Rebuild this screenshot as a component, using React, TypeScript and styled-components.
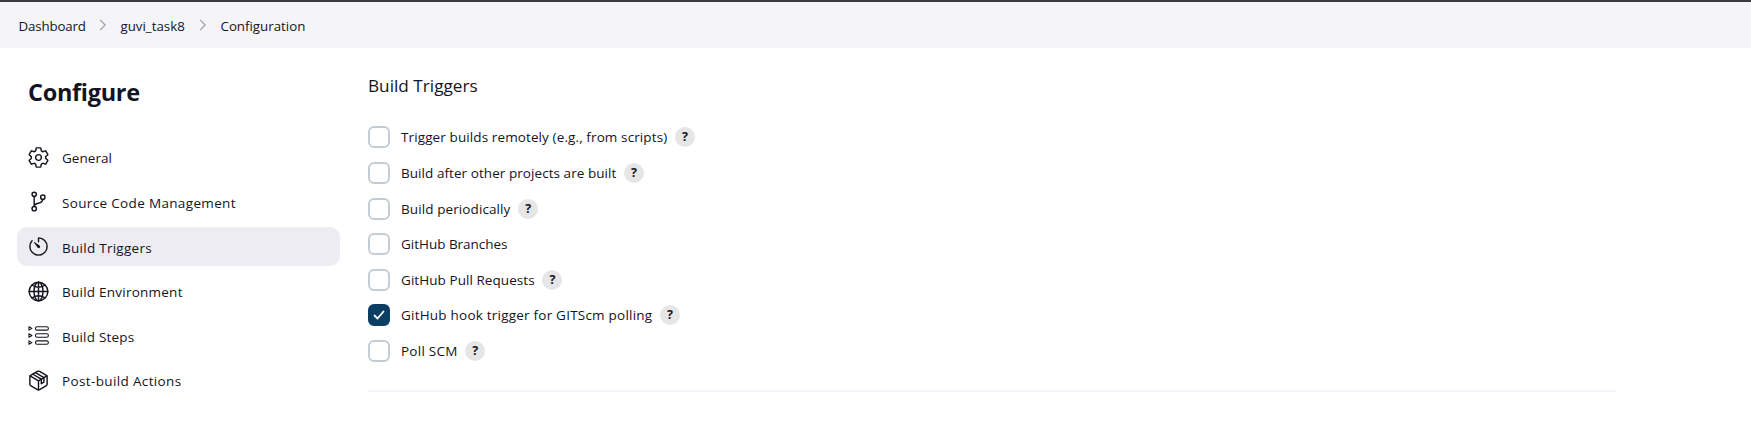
import React from 'react';
import styled, { createGlobalStyle } from 'styled-components';

const GlobalStyle = createGlobalStyle`
  *, *::before, *::after { box-sizing: border-box; }
  body {
    margin: 0;
    background: #fff;
    color: #14141f;
    font-family: 'Open Sans', 'Noto Sans', sans-serif;
    overflow: hidden;
  }
`;

const Page = styled.div`
  height: 422px;
  border-top: 2px solid #3b3a3d;
`;

const Breadcrumbs = styled.nav`
  display: flex;
  align-items: center;
  height: 46px;
  padding: 1px 18.5px 0;
  background: #f5f5f8;
`;

const Crumb = styled.span<{ $width: number; $tracking?: number }>`
  width: ${(p) => p.$width}px;
  white-space: nowrap;
  font-size: 13.3px;
  line-height: 20px;
  letter-spacing: ${(p) => p.$tracking ?? 0}px;
`;

const Chevron = styled.svg`
  width: 8px;
  height: 12px;
  margin: -2px 14px 0 13px;
  fill: none;
  stroke: #a5a5b5;
  stroke-width: 1.3;
`;

const Body = styled.div`
  display: flex;
  align-items: flex-start;
`;

const Sidebar = styled.aside`
  width: 368px;
  padding: 28px 28px 0 17px;
`;

const PageTitle = styled.h1`
  margin: 0 0 29.75px;
  padding-left: 11px;
  font-size: 23.5px;
  font-weight: 700;
  line-height: 32px;
  letter-spacing: -0.3px;
`;

const Menu = styled.ul`
  display: flex;
  flex-direction: column;
  gap: 5.64px;
  margin: 0;
  padding: 0;
  list-style: none;
`;

const MenuItem = styled.li<{ $active?: boolean }>`
  display: flex;
  align-items: center;
  gap: 12px;
  height: 39px;
  padding-left: 10px;
  border-radius: 10px;
  background: ${(p) => (p.$active ? '#ececf2' : 'transparent')};
`;

const MenuIcon = styled.svg`
  width: 23px;
  height: 23px;
  flex: none;
  fill: none;
  stroke: #14141f;
  stroke-width: 32;
  stroke-linecap: round;
  stroke-linejoin: round;
`;

const MenuLabel = styled.span<{ $tracking: number }>`
  padding-top: 2px;
  font-size: 13.5px;
  line-height: 20px;
  letter-spacing: ${(p) => p.$tracking}px;
  white-space: nowrap;
`;

const Main = styled.main`
  width: 1248px;
  padding-top: 24px;
`;

const SectionTitle = styled.h2`
  margin: 0 0 26.4px;
  font-size: 17.2px;
  font-weight: 400;
  line-height: 28px;
`;

const Options = styled.div`
  display: flex;
  flex-direction: column;
  gap: 13.6px;
  padding-bottom: 28px;
  border-bottom: 2px solid #f2f2f8;
`;

const Option = styled.label`
  display: flex;
  align-items: center;
  height: 22px;
`;

const Checkbox = styled.span<{ $checked?: boolean }>`
  display: grid;
  place-items: center;
  width: 22px;
  height: 22px;
  margin-right: 11px;
  border: 2px solid ${(p) => (p.$checked ? '#0b3e62' : '#c3cdd3')};
  border-radius: 6px;
  background: ${(p) => (p.$checked ? '#0b3e62' : '#fff')};
`;

const Check = styled.svg`
  width: 12px;
  height: 10px;
  fill: none;
  stroke: #fff;
  stroke-width: 1.8;
  stroke-linecap: round;
  stroke-linejoin: round;
`;

const OptionText = styled.span<{ $tracking: number }>`
  font-size: 13.5px;
  line-height: 20px;
  letter-spacing: ${(p) => p.$tracking}px;
  white-space: nowrap;
`;

const Help = styled.span`
  width: 20px;
  height: 20px;
  margin-left: 7.7px;
  border-radius: 50%;
  background: #e6e6e6;
  font-size: 12.5px;
  font-weight: 700;
  line-height: 20px;
  text-align: center;
`;

const icons = {
  gear: (
    <path d="M262.29 192.31a64 64 0 1057.4 57.4 64.13 64.13 0 00-57.4-57.4zM416.39 256a154.34 154.34 0 01-1.53 20.79l45.21 35.46a10.81 10.81 0 012.45 13.75l-42.77 74a10.81 10.81 0 01-13.14 4.59l-44.9-18.08a16.11 16.11 0 00-15.17 1.75A164.48 164.48 0 01325 400.8a15.94 15.94 0 00-8.82 12.14l-6.73 47.89a11.08 11.08 0 01-10.68 9.17h-85.54a11.11 11.11 0 01-10.69-8.87l-6.72-47.82a16.07 16.07 0 00-9-12.22 155.3 155.3 0 01-21.46-12.57 16 16 0 00-15.11-1.71l-44.89 18.07a10.81 10.81 0 01-13.14-4.58l-42.77-74a10.8 10.8 0 012.45-13.75l38.21-30a16.05 16.05 0 006-14.08c-.36-4.17-.58-8.33-.58-12.5s.21-8.27.58-12.35a16 16 0 00-6.07-13.94l-38.19-30A10.81 10.81 0 0149.48 186l42.77-74a10.81 10.81 0 0113.14-4.59l44.9 18.08a16.11 16.11 0 0015.17-1.75A164.48 164.48 0 01187 111.2a15.94 15.94 0 008.82-12.14l6.73-47.89A11.08 11.08 0 01213.23 42h85.54a11.11 11.11 0 0110.69 8.87l6.72 47.82a16.07 16.07 0 009 12.22 155.3 155.3 0 0121.46 12.57 16 16 0 0015.11 1.71l44.89-18.07a10.81 10.81 0 0113.14 4.58l42.77 74a10.8 10.8 0 01-2.45 13.75l-38.21 30a16.05 16.05 0 00-6.05 14.08c.33 4.14.55 8.3.55 12.47z" />
  ),
  branch: (
    <>
      <circle cx="160" cy="96" r="48" />
      <circle cx="160" cy="416" r="48" />
      <circle cx="352" cy="160" r="48" />
      <path d="M160 368V144M352 208c0 128-192 48-192 160" />
    </>
  ),
  timer: (
    <>
      <path d="M112.91 128A191.85 191.85 0 0064 254c-1.18 106.35 85.65 193.8 192 194 106.2.2 192-85.83 192-192 0-104.54-83.55-189.61-187.5-192a4.36 4.36 0 00-4.5 4.37V152" />
      <path
        d="M233.38 278.63l-79-113a8.13 8.13 0 0111.32-11.32l113 79a32.5 32.5 0 01-37.25 53.26 33.21 33.21 0 01-8.07-7.94z"
        fill="#14141f"
        stroke="none"
      />
    </>
  ),
  globe: (
    <>
      <circle cx="256" cy="256" r="208" />
      <ellipse cx="256" cy="256" rx="100" ry="208" />
      <path d="M117 117c38 27 86 43 139 43s101-16 139-43M395 395c-38-27-86-43-139-43s-101 16-139 43M256 48v416M48 256h416" />
    </>
  ),
  steps: (
    <g strokeWidth="24">
      <rect x="188" y="60" width="288" height="76" rx="38" />
      <rect x="188" y="218" width="288" height="76" rx="38" />
      <rect x="188" y="376" width="288" height="76" rx="38" />
      <path d="M44 60v76l66-38zM44 218v76l66-38zM44 376v76l66-38z" />
    </g>
  ),
  box: (
    <>
      <path d="M448 341.37V170.61A32 32 0 00432.11 143l-152-88.46a47.94 47.94 0 00-48.24 0L79.89 143A32 32 0 0064 170.61v170.76A32 32 0 0079.89 369l152 88.46a48 48 0 0048.24 0l152-88.46A32 32 0 00448 341.37z" />
      <path d="M69 153.99l187 110 187-110M256 463.99v-200" />
      <path d="M132 117l186 110v100l58-36V192L190 82" />
    </>
  ),
};

const menu: { label: string; icon: keyof typeof icons; tracking: number; active?: boolean }[] = [
  { label: 'General', icon: 'gear', tracking: 0.05 },
  { label: 'Source Code Management', icon: 'branch', tracking: 0.34 },
  { label: 'Build Triggers', icon: 'timer', tracking: 0.27, active: true },
  { label: 'Build Environment', icon: 'globe', tracking: 0.24 },
  { label: 'Build Steps', icon: 'steps', tracking: 0.22 },
  { label: 'Post-build Actions', icon: 'box', tracking: 0.36 },
];

const triggers: { label: string; tracking: number; help?: boolean; checked?: boolean }[] = [
  { label: 'Trigger builds remotely (e.g., from scripts)', tracking: 0.11, help: true },
  { label: 'Build after other projects are built', tracking: 0.06, help: true },
  { label: 'Build periodically', tracking: 0.1, help: true },
  { label: 'GitHub Branches', tracking: -0.02 },
  { label: 'GitHub Pull Requests', tracking: 0.06, help: true },
  { label: 'GitHub hook trigger for GITScm polling', tracking: 0.22, help: true, checked: true },
  { label: 'Poll SCM', tracking: 0.25, help: true },
];

const Separator = () => (
  <Chevron viewBox="0 0 8 12">
    <path d="M1.2 1l5 5-5 5" />
  </Chevron>
);

export default function App() {
  return (
    <>
      <GlobalStyle />
      <Page>
        <Breadcrumbs>
          <Crumb $width={67} $tracking={-0.15}>Dashboard</Crumb>
          <Separator />
          <Crumb $width={65}>guvi_task8</Crumb>
          <Separator />
          <Crumb $width={85}>Configuration</Crumb>
        </Breadcrumbs>
        <Body>
          <Sidebar>
            <PageTitle>Configure</PageTitle>
            <Menu>
              {menu.map((item) => (
                <MenuItem key={item.label} $active={item.active}>
                  <MenuIcon viewBox="0 0 512 512">{icons[item.icon]}</MenuIcon>
                  <MenuLabel $tracking={item.tracking}>{item.label}</MenuLabel>
                </MenuItem>
              ))}
            </Menu>
          </Sidebar>
          <Main>
            <SectionTitle>Build Triggers</SectionTitle>
            <Options>
              {triggers.map((t) => (
                <Option key={t.label}>
                  <Checkbox $checked={t.checked}>
                    {t.checked && (
                      <Check viewBox="0 0 12 10">
                        <path d="M1.5 5.5l3 3 6-7" />
                      </Check>
                    )}
                  </Checkbox>
                  <OptionText $tracking={t.tracking}>{t.label}</OptionText>
                  {t.help && <Help>?</Help>}
                </Option>
              ))}
            </Options>
          </Main>
        </Body>
      </Page>
    </>
  );
}
